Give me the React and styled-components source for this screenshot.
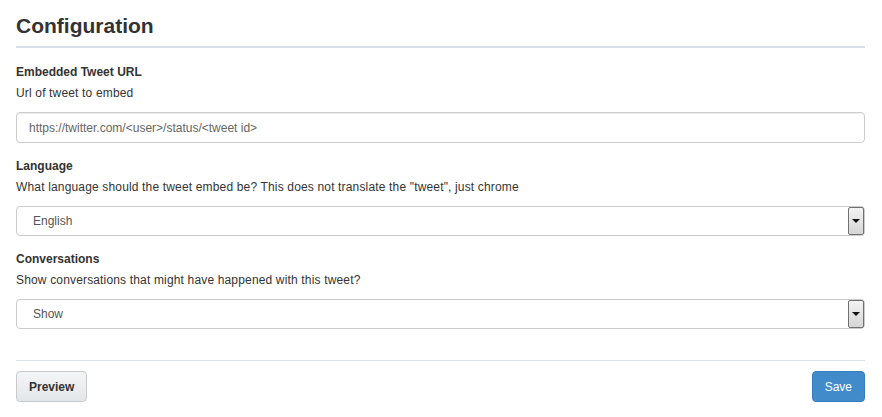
import React from "react";
import styled, { createGlobalStyle } from "styled-components";

const GlobalStyle = createGlobalStyle`
  body {
    margin: 0;
    background: #fff;
    font-family: "Liberation Sans", Arial, sans-serif;
    font-size: 12px;
    color: #333;
  }
`;

const Page = styled.div`
  padding: 10px 17px 0 16px;
`;

const Title = styled.h1`
  margin: 0;
  font-size: 21px;
  font-weight: 700;
  line-height: 32px;
  color: #333;
  padding-bottom: 4px;
  border-bottom: 2px solid #d7dfe8;
`;

const Fields = styled.div`
  padding-top: 15px;
`;

const Field = styled.div`
  margin-bottom: 14px;
`;

const Label = styled.label`
  display: block;
  font-weight: 700;
  line-height: 18px;
  margin-bottom: 3px;
`;

const Help = styled.p`
  margin: 0 0 10px;
  line-height: 18px;
  letter-spacing: 0.16px;
`;

const Input = styled.input`
  box-sizing: border-box;
  display: block;
  width: 100%;
  height: 31px;
  padding: 0 12px;
  font: 12px "Liberation Sans", Arial, sans-serif;
  color: #555;
  border: 1px solid #ccc;
  border-radius: 4px;
  box-shadow: inset 0 1px 1px rgba(0, 0, 0, 0.075);
  &::placeholder {
    color: #666;
  }
`;

const SelectWrap = styled.div`
  position: relative;
`;

const Select = styled.select`
  box-sizing: border-box;
  display: block;
  width: 100%;
  height: 30px;
  padding: 0 16px;
  font: 12px "Liberation Sans", Arial, sans-serif;
  color: #555;
  background: #fff;
  border: 1px solid #ccc;
  border-radius: 4px;
  appearance: none;
  -webkit-appearance: none;
`;

const DropButton = styled.span`
  position: absolute;
  top: 1px;
  right: 1px;
  bottom: 1px;
  width: 16px;
  box-sizing: border-box;
  border: 1px solid #707070;
  border-radius: 2px;
  background: linear-gradient(#f3f3f3, #e4e4e4 50%, #d6d6d6);
  display: flex;
  align-items: center;
  justify-content: center;
  pointer-events: none;
  &::after {
    content: "";
    border-left: 4px solid transparent;
    border-right: 4px solid transparent;
    border-top: 4px solid #111;
  }
`;

const Divider = styled.hr`
  margin: 31px 0 10px;
  border: 0;
  border-top: 1px solid #dde3ea;
`;

const Actions = styled.div`
  display: flex;
  justify-content: space-between;
`;

const Button = styled.button`
  height: 31px;
  padding: 0 12px;
  font: ${(p) => (p.primary ? 400 : 700)} 12px "Liberation Sans", Arial, sans-serif;
  border-radius: 4px;
  cursor: pointer;
  color: ${(p) => (p.primary ? "#fff" : "#333")};
  background: ${(p) =>
    p.primary ? "#428bca" : "linear-gradient(#f4f5f6, #e3e6e8)"};
  border: 1px solid ${(p) => (p.primary ? "#357ebd" : "#c8cbcd")};
`;

function SelectField({ value, options }) {
  return (
    <SelectWrap>
      <Select defaultValue={value}>
        {options.map((o) => (
          <option key={o}>{o}</option>
        ))}
      </Select>
      <DropButton />
    </SelectWrap>
  );
}

export default function App() {
  return (
    <Page>
      <GlobalStyle />
      <Title>Configuration</Title>
      <Fields>
        <Field>
          <Label>Embedded Tweet URL</Label>
          <Help>Url of tweet to embed</Help>
          <Input placeholder="https://twitter.com/<user>/status/<tweet id>" />
        </Field>
        <Field>
          <Label>Language</Label>
          <Help>
            What language should the tweet embed be? This does not translate
            the "tweet", just chrome
          </Help>
          <SelectField value="English" options={["English", "Español", "Français"]} />
        </Field>
        <Field>
          <Label>Conversations</Label>
          <Help>Show conversations that might have happened with this tweet?</Help>
          <SelectField value="Show" options={["Show", "Hide"]} />
        </Field>
      </Fields>
      <Divider />
      <Actions>
        <Button>Preview</Button>
        <Button primary>Save</Button>
      </Actions>
    </Page>
  );
}
